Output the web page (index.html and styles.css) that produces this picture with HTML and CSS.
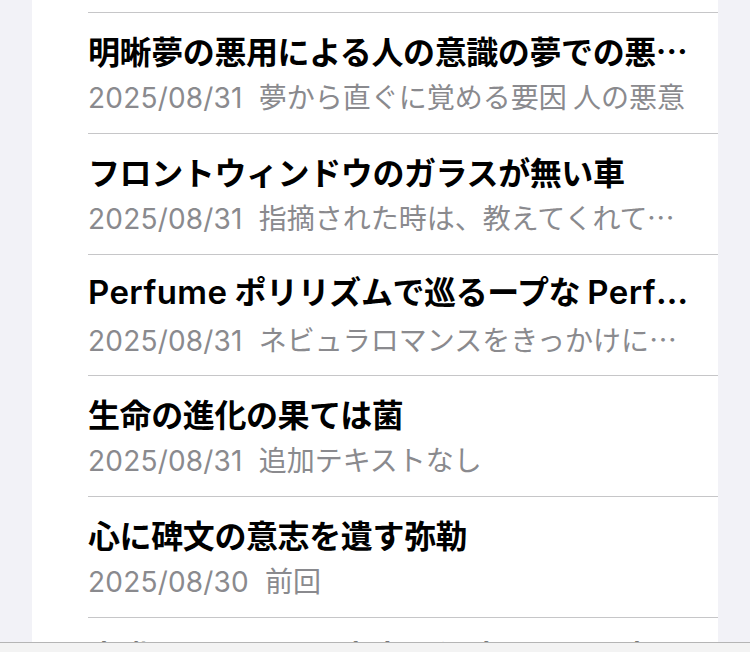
FILE: index.html
```html
<!DOCTYPE html>
<html lang="ja">
<head>
<meta charset="utf-8">
<link rel="stylesheet" href="styles.css">
</head>
<body>
<div class="page">
  <div class="card">
    <div class="tail"></div>
    <div class="row">
      <div class="title">明晰夢の悪用による人の意識の夢での悪用と対策</div>
      <div class="sub"><span class="date">2025/08/31</span>夢から直ぐに覚める要因 人の悪意</div>
    </div>
    <div class="row">
      <div class="title">フロントウィンドウのガラスが無い車</div>
      <div class="sub"><span class="date">2025/08/31</span>指摘された時は、教えてくれてありがとう</div>
    </div>
    <div class="row">
      <div class="title title-latin"><span class="lat">Perfume</span> ポリリズムで巡るープな <span class="lat">Perfume</span>の世界</div>
      <div class="sub"><span class="date">2025/08/31</span>ネビュラロマンスをきっかけに聴き始めた</div>
    </div>
    <div class="row">
      <div class="title">生命の進化の果ては菌</div>
      <div class="sub"><span class="date">2025/08/31</span>追加テキストなし</div>
    </div>
    <div class="row">
      <div class="title">心に碑文の意志を遺す弥勒</div>
      <div class="sub"><span class="date">2025/08/30</span>前回</div>
    </div>
    <div class="row">
      <div class="title">意識のレイヤーと意志の伝達について考える</div>
      <div class="sub"><span class="date">2025/08/30</span>追加テキストなし</div>
    </div>
  </div>
</div>
<div class="bottombar"></div>
</body>
</html>
```

FILE: styles.css
```css
html, body {
  margin: 0;
  padding: 0;
  background: #f2f2f7;
  height: 652px;
  overflow: hidden;
}
.page {
  padding: 0 32px;
}
.card {
  background: #ffffff;
  padding-left: 56px;
}
.tail {
  height: 12px;
}
.row {
  border-top: 1px solid #c6c6c8;
  box-sizing: border-box;
  height: 121px;
  padding: 17px 28px 0 0;
}
.title {
  font-family: "Noto Sans CJK JP", sans-serif;
  font-weight: 700;
  font-size: 32px;
  line-height: 40px;
  letter-spacing: -0.4px;
  color: #000000;
  white-space: nowrap;
  overflow: hidden;
  text-overflow: ellipsis;
}
.title-latin {
  font-family: Inter, "Noto Sans CJK JP", sans-serif;
}
.lat {
  font-family: Inter, sans-serif;
  font-weight: 600;
  font-size: 33px;
  letter-spacing: 0.4px;
}
.sub {
  margin-top: 8px;
  font-family: "Noto Sans CJK JP", sans-serif;
  font-weight: 400;
  font-size: 28px;
  line-height: 36px;
  letter-spacing: 0;
  color: #8a8a8e;
  white-space: nowrap;
  overflow: hidden;
  text-overflow: ellipsis;
}
.date {
  font-family: Inter, sans-serif;
  letter-spacing: 0.2px;
  margin-right: 16px;
}
.bottombar {
  position: fixed;
  left: 0;
  right: 0;
  bottom: 0;
  height: 9px;
  background: #f3f3f3;
  border-top: 1px solid #b5b5b5;
}
```
